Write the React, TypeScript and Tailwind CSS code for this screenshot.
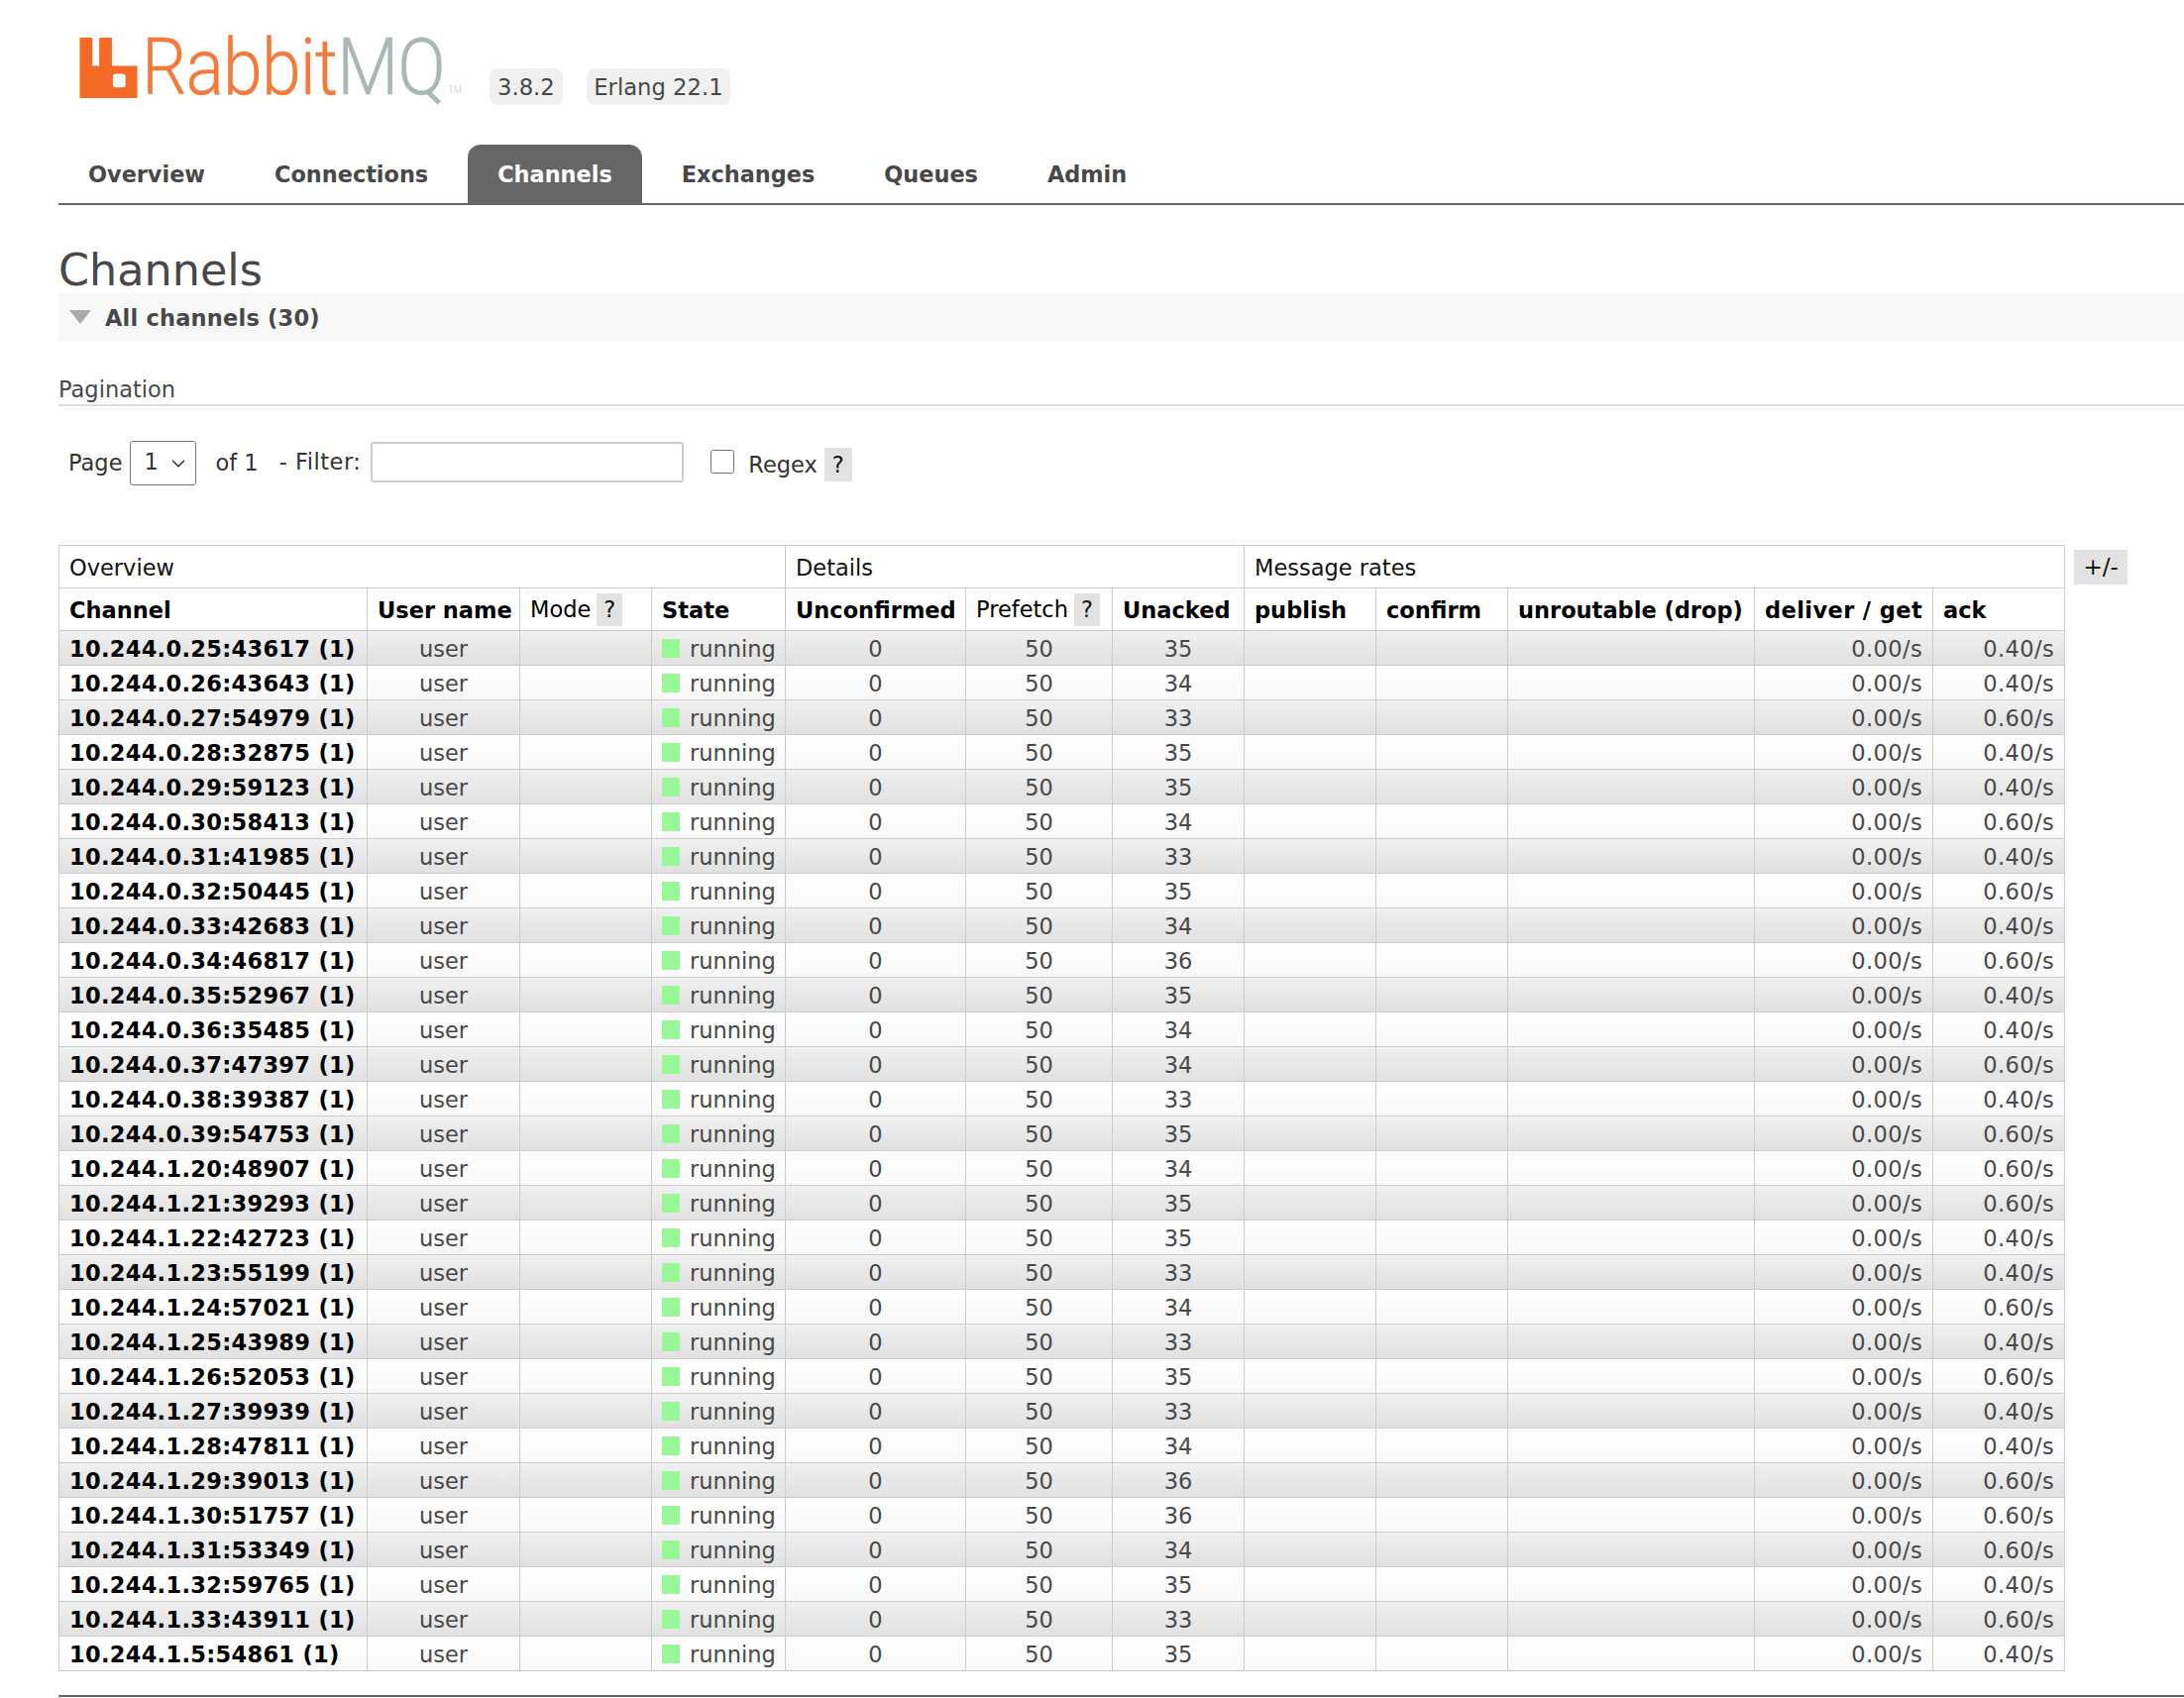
import { ChevronDown } from "lucide-react";

type Row = [string, number, string, string];
const rows: Row[] = [
  ["10.244.0.25:43617 (1)", 35, "0.00/s", "0.40/s"],
  ["10.244.0.26:43643 (1)", 34, "0.00/s", "0.40/s"],
  ["10.244.0.27:54979 (1)", 33, "0.00/s", "0.60/s"],
  ["10.244.0.28:32875 (1)", 35, "0.00/s", "0.40/s"],
  ["10.244.0.29:59123 (1)", 35, "0.00/s", "0.40/s"],
  ["10.244.0.30:58413 (1)", 34, "0.00/s", "0.60/s"],
  ["10.244.0.31:41985 (1)", 33, "0.00/s", "0.40/s"],
  ["10.244.0.32:50445 (1)", 35, "0.00/s", "0.60/s"],
  ["10.244.0.33:42683 (1)", 34, "0.00/s", "0.40/s"],
  ["10.244.0.34:46817 (1)", 36, "0.00/s", "0.60/s"],
  ["10.244.0.35:52967 (1)", 35, "0.00/s", "0.40/s"],
  ["10.244.0.36:35485 (1)", 34, "0.00/s", "0.40/s"],
  ["10.244.0.37:47397 (1)", 34, "0.00/s", "0.60/s"],
  ["10.244.0.38:39387 (1)", 33, "0.00/s", "0.40/s"],
  ["10.244.0.39:54753 (1)", 35, "0.00/s", "0.60/s"],
  ["10.244.1.20:48907 (1)", 34, "0.00/s", "0.60/s"],
  ["10.244.1.21:39293 (1)", 35, "0.00/s", "0.60/s"],
  ["10.244.1.22:42723 (1)", 35, "0.00/s", "0.40/s"],
  ["10.244.1.23:55199 (1)", 33, "0.00/s", "0.40/s"],
  ["10.244.1.24:57021 (1)", 34, "0.00/s", "0.60/s"],
  ["10.244.1.25:43989 (1)", 33, "0.00/s", "0.40/s"],
  ["10.244.1.26:52053 (1)", 35, "0.00/s", "0.60/s"],
  ["10.244.1.27:39939 (1)", 33, "0.00/s", "0.40/s"],
  ["10.244.1.28:47811 (1)", 34, "0.00/s", "0.40/s"],
  ["10.244.1.29:39013 (1)", 36, "0.00/s", "0.60/s"],
  ["10.244.1.30:51757 (1)", 36, "0.00/s", "0.60/s"],
  ["10.244.1.31:53349 (1)", 34, "0.00/s", "0.60/s"],
  ["10.244.1.32:59765 (1)", 35, "0.00/s", "0.40/s"],
  ["10.244.1.33:43911 (1)", 33, "0.00/s", "0.60/s"],
  ["10.244.1.5:54861 (1)", 35, "0.00/s", "0.40/s"],
];

const widths = [311, 154, 133, 135, 182, 148, 133, 133, 133, 249, 180, 133];
const tabs = ["Overview", "Connections", "Channels", "Exchanges", "Queues", "Admin"];

function Help() {
  return <span className="inline-block bg-[#e2e2e2] text-[#111] px-[7px] leading-[33px] ml-[6px]">?</span>;
}

function Logo() {
  return (
    <div className="flex items-start h-[66px] w-[390px] blur-[0.4px]">
      <svg width="60" height="61" viewBox="0 0 60 62" className="shrink-0 mt-[3px]">
        <path
          fill="#f46a24"
          fillRule="evenodd"
          d="M0 0h13v29h7V14h0V0h13v29h26v33H0zM37 37a3 3 0 0 0-3 3v8a3 3 0 0 0 3 3h7a3 3 0 0 0 3-3v-8a3 3 0 0 0-3-3z"
        />
      </svg>
      <div className="origin-left scale-x-[0.907] ml-[3px] flex items-start whitespace-nowrap font-['Roboto'] font-light text-[79px] leading-[66px] tracking-[-1px] [-webkit-text-stroke:0.4px]">
        <span className="text-[#f37a3a]">Rabbit</span>
        <span className="text-[#a9b8b2]">MQ</span>
        <span className="text-[#c4ccc8] text-[10px] leading-[12px] ml-[4px] mt-[50px] [-webkit-text-stroke:0px] tracking-normal">TM</span>
      </div>
    </div>
  );
}

export default function App() {
  return (
    <div className="w-[2204px] h-[1714px] overflow-hidden bg-white pl-[59px] font-['DejaVu_Sans',sans-serif] text-[17px] text-[#484848]">
      <header className="h-[146px] flex items-start">
        <div className="ml-[21px] mt-[35px]">
          <Logo />
        </div>
        <div className="ml-[24px] mt-[69px] flex gap-[24px] text-[22.7px] leading-[38px] text-[#484848]">
          <span className="h-[37px] bg-[#f0f0f0] rounded-[8px] px-[8px]">3.8.2</span>
          <span className="h-[37px] bg-[#f0f0f0] rounded-[8px] px-[7.5px]">Erlang 22.1</span>
        </div>
      </header>

      <nav className="h-[61px] border-b-2 border-[#666] flex gap-[10px] text-[22.4px] font-bold leading-[60px] items-start">
        {tabs.map((t) => (
          <a
            key={t}
            className={
              t === "Channels"
                ? "px-[30px] h-[59px] rounded-t-[13px] bg-[#666] text-white"
                : "px-[30px] h-[59px] text-[#484848]"
            }
          >
            {t}
          </a>
        ))}
      </nav>

      <h1 className="mt-[42px] mb-[-1px] text-[44.5px] leading-[48px] font-normal text-[#484848]">Channels</h1>
      <div className="h-[48px] bg-[#f8f8f8] flex items-center pl-[11px] pt-[3px] text-[22.5px] font-bold tracking-[0.2px]">
        <svg width="22" height="14" viewBox="0 0 22 14" className="mr-[14px] mb-[3px]">
          <path d="M0 0h22L11 14z" fill="#aaa" />
        </svg>
        All channels (30)
      </div>

      <div className="mt-[37px] h-[30px] border-b-2 border-[#ddd] text-[22.5px]">
        <p className="leading-[26px] mt-[-1px]">Pagination</p>
      </div>

      <div className="mt-[33px] h-[50px] flex items-center pl-[10px] text-[22.5px] text-[#333]">
        <span>Page</span>
        <span className="relative ml-[8px] mb-[2px]">
          <select className="block appearance-none w-[67px] h-[45px] border border-[#767676] rounded-[3px] pl-[13px] bg-white text-[#333]">
            <option>1</option>
          </select>
          <ChevronDown className="absolute right-[7px] top-[12px] w-[22px] h-[22px] text-[#333] pointer-events-none" strokeWidth={1.8} />
        </span>
        <span className="ml-[19px]">of 1</span>
        <span className="ml-[21px] mb-[3px] tracking-[0.5px]">- Filter:</span>
        <input className="ml-[10px] w-[316px] h-[41px] mb-[4px] border-2 border-[#ccc] rounded-[3px] bg-white" />
        <input type="checkbox" className="ml-[27px] w-[24px] h-[24px] mb-[4px]" />
        <span className="ml-[14px] mt-[3px]">Regex</span>
        <span className="inline-block bg-[#e2e2e2] text-[#111] px-[8px] leading-[34px] ml-[7px] mt-[2px]">?</span>
      </div>

      <div className="mt-[57px] flex items-start">
        <table className="table-fixed border-collapse w-[2024px] text-[22.5px] leading-[28px]">
          <colgroup>
            {widths.map((w, i) => (
              <col key={i} style={{ width: w }} />
            ))}
          </colgroup>
          <thead>
            <tr className="h-[43px] text-[#111] text-left">
              <th colSpan={4} className="border border-[#ccc] px-[10px] pt-[1px] font-normal">Overview</th>
              <th colSpan={3} className="border border-[#ccc] px-[10px] pt-[1px] font-normal">Details</th>
              <th colSpan={5} className="border border-[#ccc] px-[10px] pt-[1px] font-normal">Message rates</th>
            </tr>
            <tr className="h-[43px] text-[#000] text-left font-bold">
              <th className="border border-[#ccc] px-[10px] pt-[1px]">Channel</th>
              <th className="border border-[#ccc] px-[10px] pt-[1px] whitespace-nowrap">User name</th>
              <th className="border border-[#ccc] px-[10px] pt-[1px] font-normal whitespace-nowrap">Mode<Help /></th>
              <th className="border border-[#ccc] px-[10px] pt-[1px]">State</th>
              <th className="border border-[#ccc] px-[10px] pt-[1px]">Unconfirmed</th>
              <th className="border border-[#ccc] px-[10px] pt-[1px] font-normal whitespace-nowrap">Prefetch<Help /></th>
              <th className="border border-[#ccc] px-[10px] pt-[1px]">Unacked</th>
              <th className="border border-[#ccc] px-[10px] pt-[1px]">publish</th>
              <th className="border border-[#ccc] px-[10px] pt-[1px]">confirm</th>
              <th className="border border-[#ccc] px-[10px] pt-[1px] whitespace-nowrap">unroutable (drop)</th>
              <th className="border border-[#ccc] px-[10px] pt-[1px] whitespace-nowrap tracking-[0.4px]">deliver / get</th>
              <th className="border border-[#ccc] px-[10px] pt-[1px]">ack</th>
            </tr>
          </thead>
          <tbody>
            {rows.map(([ch, un, del, ack], i) => (
              <tr
                key={ch}
                className={
                  i % 2 === 0
                    ? "h-[35px] bg-gradient-to-b from-[#f0f0f0] to-[#e0e0e0]"
                    : "h-[35px] bg-gradient-to-b from-[#ffffff] to-[#f8f8f8]"
                }
              >
                <td className="border border-[#ccc] px-[10px] pt-[1px] font-bold text-black whitespace-nowrap tracking-[0.3px]">{ch}</td>
                <td className="border border-[#ccc] px-[10px] pt-[1px] text-center">user</td>
                <td className="border border-[#ccc] px-[10px]"></td>
                <td className="border border-[#ccc] px-[10px] pt-[1px]">
                  <span className="flex items-center gap-[10px]">
                    <span className="w-[18px] h-[19px] bg-[#98f898] shrink-0" />
                    running
                  </span>
                </td>
                <td className="border border-[#ccc] px-[10px] pt-[1px] text-center">0</td>
                <td className="border border-[#ccc] px-[10px] pt-[1px] text-center">50</td>
                <td className="border border-[#ccc] px-[10px] pt-[1px] text-center">{un}</td>
                <td className="border border-[#ccc] px-[10px]"></td>
                <td className="border border-[#ccc] px-[10px]"></td>
                <td className="border border-[#ccc] px-[10px]"></td>
                <td className="border border-[#ccc] px-[10px] pt-[1px] text-right tracking-[0.4px]">{del}</td>
                <td className="border border-[#ccc] px-[10px] pt-[1px] text-right tracking-[0.4px]">{ack}</td>
              </tr>
            ))}
          </tbody>
        </table>
        <span className="ml-[9px] mt-[5px] w-[54px] text-center bg-[#e2e2e2] text-[#111] text-[23px] leading-[35px]">+/-</span>
      </div>

      <div className="mt-[24px] h-[2px] bg-[#666]" />
    </div>
  );
}
